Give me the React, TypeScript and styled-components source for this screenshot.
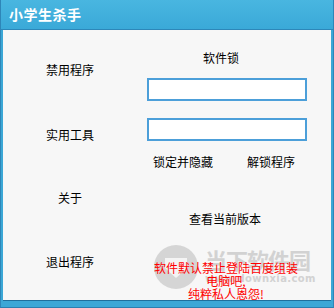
import React from 'react';
import styled, { createGlobalStyle } from 'styled-components';

const GlobalStyle = createGlobalStyle`
  html, body {
    margin: 0;
    padding: 0;
    background: #ffffff;
  }
  body {
    font-family: "Noto Sans CJK SC", "DejaVu Sans", sans-serif;
  }
`;

const Window = styled.div`
  width: 334px;
  height: 308px;
  box-sizing: border-box;
  display: flex;
  flex-direction: column;
  background: #3ba7d6;
  border-left: 1px solid #2e86b8;
  border-right: 1px solid #2e86b8;
  border-bottom: 1px solid #2a7fb0;
`;

const TitleBar = styled.div`
  height: 29px;
  display: flex;
  align-items: center;
  padding-left: 8px;
  background: linear-gradient(#49b6e0, #3aa9d8);
  border-bottom: 1px solid #2d87b9;
`;

const Title = styled.span`
  color: #ffffff;
  font-size: 14px;
  font-weight: bold;
  letter-spacing: 0.5px;
  margin-top: -1px;
`;

const Body = styled.div`
  position: relative;
  flex: 1;
  margin: 0 2px 6px 2px;
  background: #f7f7f7;
  border-bottom: 1px solid #1f6f9c;
  display: grid;
  grid-template-columns: 134px 1fr;
`;

const LeftColumn = styled.div`
  display: flex;
  flex-direction: column;
  align-items: center;
`;

const RightColumn = styled.div`
  display: flex;
  flex-direction: column;
  align-items: flex-start;
  position: relative;
  z-index: 1;
`;

const Label = styled.div<{ $top: number }>`
  margin-top: ${p => p.$top}px;
  font-size: 12px;
  line-height: 12px;
  height: 12px;
  color: #000;
  white-space: nowrap;
`;

const Caption = styled(Label)<{ $left: number }>`
  margin-left: ${p => p.$left}px;
`;

const TextBox = styled.input<{ $top: number }>`
  margin-top: ${p => p.$top}px;
  margin-left: 10px;
  width: 160px;
  height: 23px;
  box-sizing: border-box;
  border: 2px solid #4c9fd9;
  background: #ffffff;
  outline: none;
  padding: 0 3px;
`;

const ButtonRow = styled.div`
  display: flex;
  margin-top: 15px;
  margin-left: 16px;
  gap: 34px;
`;

const LinkButton = styled.span`
  font-size: 12px;
  line-height: 12px;
  color: #000;
  white-space: nowrap;
`;

const Notice = styled.div`
  margin-top: 36px;
  width: 178px;
  text-align: center;
  font-size: 12px;
  line-height: 13px;
  color: #ff0000;
`;

const Watermark = styled.div`
  position: absolute;
  left: 150px;
  top: 214px;
  display: flex;
  align-items: center;
  gap: 6px;
  opacity: 0.9;
`;

const WatermarkText = styled.div`
  display: flex;
  flex-direction: column;
  color: #cfcfcf;
  font-weight: bold;
`;

const WatermarkTitle = styled.span`
  font-size: 22px;
  line-height: 24px;
  letter-spacing: -1px;
`;

const WatermarkUrl = styled.span`
  font-family: "DejaVu Sans", sans-serif;
  font-size: 10px;
  line-height: 16px;
  letter-spacing: 0.4px;
`;

const App: React.FC = () => {
  return (
    <>
      <GlobalStyle />
      <Window>
        <TitleBar>
          <Title>小学生杀手</Title>
        </TitleBar>
        <Body>
          <Watermark>
            <svg width="46" height="46" viewBox="0 0 46 46">
              <circle cx="23" cy="23" r="22" fill="#d2d2d2" />
              <path d="M12 14 L34 14 L34 24 L23 34 L12 24 Z" fill="#f4f4f4" />
            </svg>
            <WatermarkText>
              <WatermarkTitle>当下软件园</WatermarkTitle>
              <WatermarkUrl>www.downxia.com</WatermarkUrl>
            </WatermarkText>
          </Watermark>
          <LeftColumn>
            <Label $top={34}>禁用程序</Label>
            <Label $top={53}>实用工具</Label>
            <Label $top={51}>关于</Label>
            <Label $top={52}>退出程序</Label>
          </LeftColumn>
          <RightColumn>
            <Caption $top={22} $left={66}>软件锁</Caption>
            <TextBox $top={14} />
            <TextBox $top={17} />
            <ButtonRow>
              <LinkButton>锁定并隐藏</LinkButton>
              <LinkButton>解锁程序</LinkButton>
            </ButtonRow>
            <Caption $top={45} $left={52}>查看当前版本</Caption>
            <Notice>
              软件默认禁止登陆百度组装<br />
              电脑吧,<br />
              纯粹私人恩怨!
            </Notice>
          </RightColumn>
        </Body>
      </Window>
    </>
  );
};

export default App;
